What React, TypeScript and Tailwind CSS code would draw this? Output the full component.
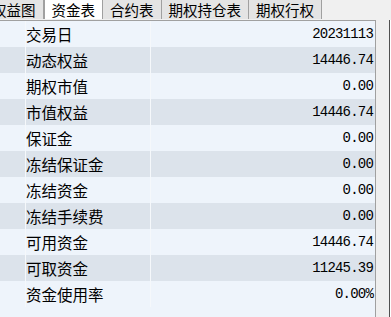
const tabs = [
  { label: '权益图', active: false },
  { label: '资金表', active: true },
  { label: '合约表', active: false },
  { label: '期权持仓表', active: false },
  { label: '期权行权', active: false },
];

const rows: [string, string][] = [
  ['交易日', '20231113'],
  ['动态权益', '14446.74'],
  ['期权市值', '0.00'],
  ['市值权益', '14446.74'],
  ['保证金', '0.00'],
  ['冻结保证金', '0.00'],
  ['冻结资金', '0.00'],
  ['冻结手续费', '0.00'],
  ['可用资金', '14446.74'],
  ['可取资金', '11245.39'],
  ['资金使用率', '0.00%'],
];

export default function App() {
  return (
    <div
      className="w-[391px] h-[317px] overflow-hidden bg-[#f0f0f0] text-black"
      style={{ fontFamily: '"Noto Sans CJK SC", "Noto Sans", sans-serif' }}
    >
      {/* tab strip, first tab scrolled partly out of view */}
      <div className="flex h-[20px] bg-[#f0f0f0] ml-[-15px]">
        {tabs.map((t) => (
          <div
            key={t.label}
            className={`h-[19px] px-[7px] flex items-center text-[14.5px] leading-[18px] whitespace-nowrap border-r border-[#a0a0a0] ${
              t.active ? 'bg-white border-l' : 'bg-[#e4e4e4]'
            }`}
          >
            {t.label}
          </div>
        ))}
      </div>

      <div className="flex h-[297px]">
        {/* grid */}
        <div className="w-[376px] border-r border-t border-[#a0a0a0] bg-[#eef4fb] flex flex-col">
          {rows.map(([label, value], i) => (
            <div
              key={label}
              className={`flex h-[26px] shrink-0 ${i % 2 === 0 ? 'bg-[#eef4fb]' : 'bg-[#dce3eb]'}`}
            >
              <div className="w-[26px] border-r border-[#f5f8fb]" />
              <div className="w-[125px] border-r border-[#f5f8fb] flex items-center text-[15.5px] leading-[20px]">
                {label}
              </div>
              <div
                className="flex-1 flex items-center justify-end pr-[2px] text-[14px] tracking-[-0.8px] leading-[20px]"
                style={{ fontFamily: '"Liberation Mono", monospace' }}
              >
                {value}
              </div>
            </div>
          ))}
        </div>
        <div className="w-[13px] bg-[#efefef]" />
        <div className="w-[1px] bg-[#505050]" />
        <div className="flex-1 bg-white" />
      </div>
    </div>
  );
}
